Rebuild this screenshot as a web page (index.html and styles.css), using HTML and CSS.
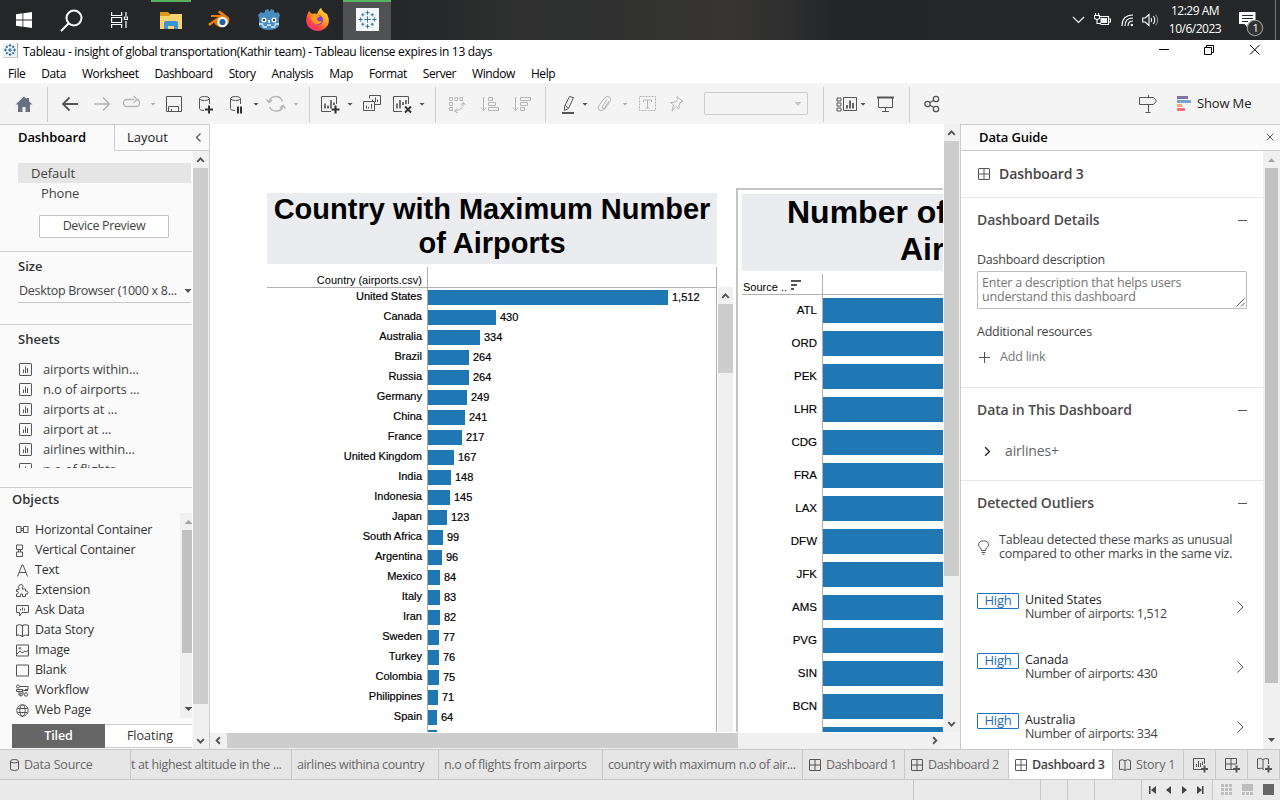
FILE: index.html
```html
<!DOCTYPE html>
<html lang="en">
<head>
<meta charset="utf-8">
<title>Tableau - insight of global transportation</title>
<link rel="stylesheet" href="styles.css">
</head>
<body>
<svg class="defs" width="0" height="0">
  <symbol id="sheet" viewBox="0 0 13 13"><rect x=".5" y=".5" width="12" height="12" rx=".6"/><path d="M4.500 10V6.500M6.500 10V3.500M8.500 10V5"/></symbol>
  <symbol id="grid" viewBox="0 0 12 12"><rect x=".5" y=".5" width="11" height="11" rx=".5"/><path d="M6 .5v11M.5 6h11"/></symbol>
  <symbol id="book" viewBox="0 0 12 12"><path d="M.5 1.500Q3.500-.3 6 1.800 8.500-.3 11.500 1.500V10.500Q8.500 9.500 6 11.500 3.500 9.500.5 10.500ZM6 2v9"/></symbol>
  <symbol id="chev" viewBox="0 0 9 14"><path d="M1.500 1.500 7 7l-5.500 5.500"/></symbol>
  <symbol id="caret" viewBox="0 0 8 22"><path d="M1.500 10h5L4 12.800z"/></symbol>
  <symbol id="logo" viewBox="0 0 20 20"><path d="M10 7v6M7 10h6M10 1.500v4M8 3.500h4M10 14.500v4M8 16.500h4M3.500 8v4M1.500 10h4M16.500 8v4M14.500 10h4M5.500 4v3M4 5.500h3M14.500 4v3M13 5.500h3M5.500 13v3M4 14.500h3M14.500 13v3M13 14.500h3"/></symbol>
  <symbol id="sup" viewBox="0 0 16 17"><path d="M4.500 11 8 7.200 11.500 11"/></symbol>
  <symbol id="sdown" viewBox="0 0 16 17"><path d="M4.500 7 8 10.800 11.500 7"/></symbol>
</svg>

<header class="taskbar">
  <svg class="tk win" viewBox="0 0 16 16"><path d="M0 2.200 6.500 1.300V7.600H0zM7.300 1.200 16 0v7.600H7.300zM0 8.400h6.500v6.400L0 13.800zM7.300 8.400H16V16l-8.700-1.200z"/></svg>
  <svg class="tk find" viewBox="0 0 23 23"><circle cx="14" cy="9" r="7.500"/><path d="M8.500 14.500 1 22"/></svg>
  <svg class="tk view" viewBox="0 0 17 16"><path d="M.6 0v3.500h10V0M.6 16v-3.500h10V16M.6 5.500h10v5H.6zM15 0v4M15 9v7"/><path d="M13.500 5h3v2.500h-3z"/></svg>
  <span class="task files"><svg viewBox="0 0 22 18"><path fill="#dc9a18" d="M0 1h8l2 2h12v15H0z"/><path fill="#f9d371" d="M0 5h9l2-2h11v15H0z"/><path fill="#3c94d8" d="M4 18v-6q0-2 2-2h10q2 0 2 2v6h-4v-3H8v3z"/></svg></span>
  <svg class="tk blender" viewBox="0 0 24 20"><path fill="#e87d0d" d="M0 14 10 7H3V5h10L9.500 2 12 .5l9 7a7.800 7 0 1 1-15 5L2 16z"/><circle cx="14.500" cy="12" r="5.200" fill="#fff"/><circle cx="14.500" cy="12" r="3.100" fill="#25659c"/></svg>
  <svg class="tk godot" viewBox="0 0 22 21"><path fill="#478cbf" d="m0 6 3-3 2 1 2-1V1l3-1 1 2h1l1-2 3 1v2l2 1 2-1 2 3-1 3v8q-3 4-10 4T1 17V9z"/><path fill="#b9d5e9" d="M1 14h4l1 3h3v-2h4v2h3l1-3h4v2h-3l-1 3h-4v-2H9v2H5l-1-3H1z"/><circle cx="6" cy="11" r="2.500" fill="#fff"/><circle cx="16" cy="11" r="2.500" fill="#fff"/><path fill="#414042" d="M5 10h2v2H5zM15 10h2v2h-2z"/><path fill="#fff" d="M10.300 11h1.400v3h-1.400z"/></svg>
  <svg class="tk fox" viewBox="0 0 23 23"><defs><linearGradient id="fx" x1="1" y1="0" x2=".2" y2="1"><stop offset="0" stop-color="#fff044"/><stop offset=".4" stop-color="#ffa51f"/><stop offset=".75" stop-color="#ff4545"/><stop offset="1" stop-color="#ee2b86"/></linearGradient></defs><path fill="url(#fx)" d="M2 5 3 3l3 3q3-1 5 0 2-5 4-6 1 3 4 5l2 1q3 6 1 11-4 6-11 6Q2 22 .3 14 0 8 2 5z"/><circle cx="12" cy="12" r="5" fill="#7b43d1"/><path fill="#ff9822" d="M5 6q5-1 7 1l3 1-4 2q0 4 5 3-2 4-7 3-5-3-4-10z"/></svg>
  <span class="task app"><span><svg viewBox="0 0 20 20"><use href="#logo"/></svg></span></span>
  <div class="tray">
    <svg class="t1" viewBox="0 0 13 8"><path d="m1 1 5.500 5.500L12 1"/></svg>
    <svg class="t2" viewBox="0 0 17 13"><path d="M5 3.500h9.500v8h-8M15 6h1.500v3H15M1.500 0v3M4.500 0v3M.5 2.500h5v3l-2 1h-1l-2-1zM3 6v4.500h4"/><path class="fl" d="M6.500 5H13v5H6.500z"/></svg>
    <svg class="t3" viewBox="0 0 13 13"><path d="M1 12Q1 1 12 1M4 12q0-8 8-8M7 12q0-5 5-5"/><circle cx="10.800" cy="11" r="1.200" class="fl"/></svg>
    <svg class="t4" viewBox="0 0 17 14"><path d="M.7 5h2.500L7 1.500v11L3.200 9H.7zM9 5q1.500 2 0 4M11.300 3q3 4 0 8"/><path opacity=".45" d="M13.600 1.500q4.300 5.500 0 11"/></svg>
    <div class="clock"><span>12:29 AM</span><span>10/6/2023</span></div>
    <svg class="t5" viewBox="0 0 25 25"><path class="fl" d="M0 0h16.500v12H9v4l-3.500-4H0z"/><path stroke="#26282a" d="M3 3.500h11M3 6.500h11M3 9.500h6"/><circle cx="16" cy="16" r="7.700" fill="#333" stroke="#989898"/><text x="13.500" y="20">1</text></svg>
    <i class="peek"></i>
  </div>
</header>

<div class="titlebar">
  <span class="ico"><svg viewBox="0 0 20 20"><use href="#logo"/></svg></span>
  <span class="cap">Tableau - insight of global transportation(Kathir team) - Tableau license expires in 13 days</span>
  <svg class="winctl" viewBox="0 0 102 12"><path d="M0 5.500h10M45.500 3.500h7v7h-7zM47.500 3V1.500h7v7H53M91 1l9.500 9.500M100.500 1 91 10.500"/></svg>
</div>
<nav class="menu"><span>File</span><span>Data</span><span>Worksheet</span><span>Dashboard</span><span>Story</span><span>Analysis</span><span>Map</span><span>Format</span><span>Server</span><span>Window</span><span>Help</span></nav>

<div class="toolbar">
  <svg class="i home m13" viewBox="0 0 22 22"><path d="M11 3.500 2.500 11.500H5V19h4.500v-5h3v5H17v-7.500h2.500L16 8.300V5h-2.500v1z"/></svg>
  <i class="sep m12"></i>
  <svg class="i m11" viewBox="0 0 22 22"><path stroke-width="1.800" d="M19 11H4.500M10.500 4.500 4 11l6.500 6.500"/></svg>
  <svg class="i off m10" viewBox="0 0 22 22"><path stroke-width="1.500" d="M3 11h15M12 4.500 18.500 11 12 17.500"/></svg>
  <svg class="i off m8" viewBox="0 0 22 22"><path stroke-width="1.300" d="M13 6.500H6q-3.500 0-3.500 3.500T6 13.500h9q3.500 0 3.500-3.500T16 6.500M12.500 3 16 6.500 12.500 10"/></svg>
  <svg class="c off m6"><use href="#caret"/></svg>
  <svg class="i m6" viewBox="0 0 22 22"><path d="M3.500 3.500h15v15h-15zM5.500 18.500v-5h10v5M8.500 16v2.500"/></svg>
  <svg class="i m10" viewBox="0 0 22 22"><ellipse cx="9.500" cy="5.500" rx="5" ry="2"/><path d="M4.500 5.500v10q0 2 4.500 2M14.500 5.500V11"/><path class="dk" d="M14 12.500v8M10 16.500h8"/></svg>
  <svg class="i m8" viewBox="0 0 22 22"><ellipse cx="10.500" cy="5.500" rx="5" ry="2"/><path d="M5.500 5.500v10q0 2 4.500 2M15.500 5.500V11"/><path class="dk" d="M13 13.500v7M16 13.500v7"/></svg>
  <svg class="c m5"><use href="#caret"/></svg>
  <svg class="i off m5" viewBox="0 0 22 22"><path stroke-width="1.300" d="M4 9q1-5.500 7-5.500 4.500 0 6.500 5M18 13q-1 5-7 5-4.500 0-6.500-4M1.500 6.500 4 9.500 7 7M20.500 15.500 18 12.500 15 15"/></svg>
  <svg class="c off m5"><use href="#caret"/></svg>
  <i class="sep m9"></i>
  <svg class="i m10" viewBox="0 0 22 22"><path d="M11 18.500H1.500v-15h15V11"/><path stroke-width="1.600" d="M5 15.500v-5M8 15.500v-3M11 15.500V7M14 12V9.500"/><path class="dk" d="M15.500 12.500v8M11.500 16.500h8"/></svg>
  <svg class="c m4"><use href="#caret"/></svg>
  <svg class="i m6" viewBox="0 0 22 22"><path d="M9.500 5.500v-3h11v9h-6M3.500 8.500h11v9h-11zM12.500 8V6.500M15.500 9V4.500M17.500 9V6.500M6.500 15.500v-3M8.500 15.500V14M11.500 15.500V11"/></svg>
  <svg class="i m10" viewBox="0 0 22 22"><path d="M10 18.500H1.500v-15h15V11"/><path stroke-width="1.600" d="M5 15.500v-5M8 15.500V7M11 12V9M14 11V7"/><path class="dk" d="m13 13.500 6 6m0-6-6 6"/></svg>
  <svg class="c m4"><use href="#caret"/></svg>
  <i class="sep m9"></i>
  <svg class="i off m10" viewBox="0 0 22 22"><path d="M3.500 4.500h3v3h-3zM9 4.500h2.500v3H9zM14 4.500h2.500v3H14zM3.500 9.500h3v3h-3zM3.500 14.500h3v3h-3zM9 18q8-1 8.500-8M11.500 15.500 8.500 18l3.500 2M14.500 12l3-2.500 2 2.500"/></svg>
  <svg class="i off m11" viewBox="0 0 22 22"><path d="M4.500 4v13M2 14.500 4.500 17.500 7 14.500M9.500 4.500h4v3h-4zM9.500 9.500h7v3h-7zM9.500 14.500h10v3h-10z"/></svg>
  <svg class="i off m10" viewBox="0 0 22 22"><path d="M4.500 4v13M2 14.500 4.500 17.500 7 14.500M9.500 4.500h10v3h-10zM9.500 9.500h7v3h-7zM9.500 14.500h4v3h-4z"/></svg>
  <i class="sep m12"></i>
  <svg class="i m11" viewBox="0 0 22 22"><path d="m12.500 3.500 4 1-5 11-4 2v-4zM8 12.500l3.500 2.500"/><path stroke-width="2" d="M5 20h12"/></svg>
  <svg class="c m2"><use href="#caret"/></svg>
  <svg class="i off m5" viewBox="0 0 22 22"><path d="m15 8-5 8q-2 2.500-5 1-2-2 0-4.500l6-8q2-2 4.500-.5 2 2 .5 4.500l-5.500 8M13 6.500l-5 7.500q0 2 2 1"/></svg>
  <svg class="c off m5"><use href="#caret"/></svg>
  <svg class="i off m7" viewBox="0 0 22 22"><path stroke-dasharray="2 1" d="M3.500 3.500h16v14h-16z"/><path d="M7.500 9V7h8v2M11.500 7v8M9.500 15h4"/></svg>
  <svg class="i off m8" viewBox="0 0 22 22"><path d="m11 3.500 6 5-2 .5-2 3v4l-3-2.500-4 4.500 1.500-6-3-2.500 5-.5 2-2.500z"/></svg>
  <span class="pick m16"><svg viewBox="0 0 8 6"><path d="M.5 1h7L4 5z"/></svg></span>
  <i class="sep m15"></i>
  <svg class="i m12" viewBox="0 0 22 22"><path d="M1 5h4v3H1zM1 10h4v3H1zM1 15h4v3H1zM7.500 4.500h13v13h-13z"/><path stroke-width="1.800" d="M11 15.500V12M14 15.500v-8M17 15.500V10"/></svg>
  <svg class="c m1"><use href="#caret"/></svg>
  <svg class="i m7" viewBox="0 0 22 22"><path d="M4.500 4.500v10h14v-10M11.500 14.500v4M8 18.500h7"/><path stroke-width="2" d="M3 4.500h17"/></svg>
  <i class="sep m13"></i>
  <svg class="i share m11" viewBox="0 0 22 22"><circle cx="6.500" cy="11" r="2.700"/><circle cx="15" cy="6" r="2.700"/><circle cx="15" cy="16" r="2.700"/><path d="m9 9.500 3.500-2M9 12.300l3.500 2"/></svg>
  <svg class="i sign" viewBox="0 0 22 22"><path d="M2.500 4.500h14l3 3.500-3 3.500h-14zM11.500 2v2M11.500 11.500v8M8.500 19.500h5"/></svg>
  <svg class="bars" viewBox="0 0 14 15"><path fill="#8274a5" d="M0 0h11v3H0z"/><path fill="#7ba3cf" d="M0 4h14v3H0z"/><path fill="#f3a66f" d="M0 8h5v3H0z"/><path fill="#fb6c7c" d="M0 12h8v3H0z"/></svg>
  <span class="showme">Show Me</span>
</div>

<main>
  <aside class="left">
    <div class="ltabs"><b>Dashboard</b><span class="lay"><span>Layout</span><svg viewBox="0 0 9 14"><path d="M6.500 3.500 2.500 7.500l4 4"/></svg></span></div>
    <div class="lbody">
      <div class="lcol">
        <div class="row def"><span>Default</span></div>
        <div class="row pho"><span>Phone</span></div>
        <div class="dev"><span>Device Preview</span></div>
        <section class="size"><h4>Size</h4><div class="drop"><span>Desktop Browser (1000 x 8...</span><svg viewBox="0 0 8 6"><path d="M.5 1h7L4 5z"/></svg></div></section>
        <section class="sheets"><h4>Sheets</h4>
          <ul>
            <li><svg><use href="#sheet"/></svg><span>airports within...</span></li>
            <li><svg><use href="#sheet"/></svg><span>n.o of airports ...</span></li>
            <li><svg><use href="#sheet"/></svg><span>airports at ...</span></li>
            <li><svg><use href="#sheet"/></svg><span>airport at ...</span></li>
            <li><svg><use href="#sheet"/></svg><span>airlines within...</span></li>
            <li><svg><use href="#sheet"/></svg><span>n.o of flights ...</span></li>
          </ul>
        </section>
        <section class="objects"><h4>Objects</h4>
          <div class="olist">
            <ul>
              <li><svg viewBox="0 0 13 13"><path d="M.5 2.500h4.500v6H.5zM7.500 2.500H12v6H7.500zM5 4.500h2.500M5 6.500h2.500"/></svg><span>Horizontal Container</span></li>
              <li><svg viewBox="0 0 13 13"><path d="M.5 1h6v4.500h-6zM.5 8h6v4.500h-6zM2.500 5.500V8M4.500 5.500V8"/></svg><span>Vertical Container</span></li>
              <li><svg viewBox="0 0 13 13"><path d="M1.500 12.500 6 1h1l4.500 11.500M3 8.500h7"/></svg><span>Text</span></li>
              <li><svg viewBox="0 0 13 13"><path d="M.5 5.500H3V4L2.500 2.500q.5-2 2.500-2t2 2L6.500 4v1h3v2q2.500-.5 2.500 1.500T9.500 10v2.500h-3V10h-2v2.500h-4V10q2 0 2-1.500t-2-1z"/></svg><span>Extension</span></li>
              <li><svg viewBox="0 0 13 13"><path d="M.5 1.500h12v7H6L3.500 12V8.500h-3zM4.500 6.500V5M6.500 6.500V3.500M8.500 6.500v-2"/></svg><span>Ask Data</span></li>
              <li><svg viewBox="0 0 12 12"><use href="#book"/></svg><span>Data Story</span></li>
              <li><svg viewBox="0 0 13 13"><path d="M.5 1h12v11H.5zM1 10l3-3 2 2 3-2 1.500 1L12 6"/><circle cx="4" cy="4.300" r=".8"/></svg><span>Image</span></li>
              <li><svg viewBox="0 0 13 13"><path d="M.5 1h12v11H.5z"/></svg><span>Blank</span></li>
              <li><svg viewBox="0 0 13 13"><circle cx="2" cy="2.500" r="1.500"/><circle cx="10" cy="10.500" r="1.700"/><path d="M4 2.500h8v3H9M.5 5.500h6v2h-6zM3 8v3h2.500M7 5.500v5M8 6.500h4"/><circle cx="5" cy="10.500" r="1.500"/></svg><span>Workflow</span></li>
              <li><svg viewBox="0 0 13 13"><circle cx="6.500" cy="6.500" r="5.700"/><ellipse cx="6.500" cy="6.500" rx="2.700" ry="5.700"/><path d="M1.500 4.500h10M1.500 8.500h10"/></svg><span>Web Page</span></li>
            </ul>
            <div class="oscroll"><svg viewBox="0 0 12 17"><path fill="#a3a3a3" d="M4.500 11 8.500 7l4 4z"/></svg><i></i><svg viewBox="0 0 12 17"><path fill="#505050" d="m4.500 6 4 4 4-4z"/></svg></div>
          </div>
        </section>
        <div class="mode"><b>Tiled</b><span>Floating</span></div>
      </div>
      <div class="vbar"><svg><use href="#sup"/></svg><i></i><svg><use href="#sdown"/></svg></div>
    </div>
  </aside>

  <div class="canvas">
    <div class="stage">
      <div class="viz one">
        <h2><span>Country with Maximum Number</span><span>of Airports</span></h2>
        <div class="plot">
          <div class="hd"><span>Country (airports.csv)</span></div>
          <div class="r"><span>United States</span><i style="width:240px"></i><b>1,512</b></div>
          <div class="r"><span>Canada</span><i style="width:68px"></i><b>430</b></div>
          <div class="r"><span>Australia</span><i style="width:52px"></i><b>334</b></div>
          <div class="r"><span>Brazil</span><i style="width:41px"></i><b>264</b></div>
          <div class="r"><span>Russia</span><i style="width:41px"></i><b>264</b></div>
          <div class="r"><span>Germany</span><i style="width:39px"></i><b>249</b></div>
          <div class="r"><span>China</span><i style="width:37px"></i><b>241</b></div>
          <div class="r"><span>France</span><i style="width:34px"></i><b>217</b></div>
          <div class="r"><span>United Kingdom</span><i style="width:26px"></i><b>167</b></div>
          <div class="r"><span>India</span><i style="width:23px"></i><b>148</b></div>
          <div class="r"><span>Indonesia</span><i style="width:22px"></i><b>145</b></div>
          <div class="r"><span>Japan</span><i style="width:19px"></i><b>123</b></div>
          <div class="r"><span>South Africa</span><i style="width:15px"></i><b>99</b></div>
          <div class="r"><span>Argentina</span><i style="width:14px"></i><b>96</b></div>
          <div class="r"><span>Mexico</span><i style="width:12px"></i><b>84</b></div>
          <div class="r"><span>Italy</span><i style="width:12px"></i><b>83</b></div>
          <div class="r"><span>Iran</span><i style="width:12px"></i><b>82</b></div>
          <div class="r"><span>Sweden</span><i style="width:11px"></i><b>77</b></div>
          <div class="r"><span>Turkey</span><i style="width:11px"></i><b>76</b></div>
          <div class="r"><span>Colombia</span><i style="width:11px"></i><b>75</b></div>
          <div class="r"><span>Philippines</span><i style="width:10px"></i><b>71</b></div>
          <div class="r"><span>Spain</span><i style="width:9px"></i><b>64</b></div>
          <div class="r"><span></span><i style="width:9px"></i></div>
        </div>
      </div>
      <div class="vbar mini"><svg><use href="#sup"/></svg><i></i></div>
      <div class="viz two">
        <h2><span>Number of</span><span class="l2">Airports</span></h2>
        <div class="plot">
          <div class="hd"><span>Source ..</span><svg viewBox="0 0 10 10"><path d="M0 0h10v2H0zM0 4h6v2H0zM0 8h3v2H0z"/></svg></div>
          <div class="r"><span>ATL</span><i></i></div><div class="r"><span>ORD</span><i></i></div><div class="r"><span>PEK</span><i></i></div><div class="r"><span>LHR</span><i></i></div><div class="r"><span>CDG</span><i></i></div><div class="r"><span>FRA</span><i></i></div><div class="r"><span>LAX</span><i></i></div><div class="r"><span>DFW</span><i></i></div><div class="r"><span>JFK</span><i></i></div><div class="r"><span>AMS</span><i></i></div><div class="r"><span>PVG</span><i></i></div><div class="r"><span>SIN</span><i></i></div><div class="r"><span>BCN</span><i></i></div><div class="r"><span></span><i></i></div>
        </div>
      </div>
    </div>
    <div class="vbar cv"><svg><use href="#sup"/></svg><i></i><svg><use href="#sdown"/></svg></div>
    <div class="hbar"><svg viewBox="0 0 17 16"><path d="M10 4.500 6.500 8l3.500 3.500"/></svg><i></i><svg viewBox="0 0 17 16"><path d="M7 4.500 10.500 8 7 11.500"/></svg></div>
    <div class="corner"></div>
  </div>

  <aside class="guide">
    <div class="ghead"><b>Data Guide</b><svg viewBox="0 0 8 8"><path d="m.7.7 6.600 6.600m0-6.600L.7 7.300"/></svg></div>
    <div class="gwrap">
      <div class="gcol">
        <div class="gname"><svg viewBox="0 0 12 12"><use href="#grid"/></svg><b>Dashboard 3</b></div>
        <section class="det"><h3><span>Dashboard Details</span><i></i></h3>
          <label>Dashboard description</label>
          <div class="area"><span>Enter a description that helps users<br>understand this dashboard</span><svg viewBox="0 0 9 9"><path d="M.5 8.500l8-8M5 8.500 8.500 5"/></svg></div>
          <label class="res">Additional resources</label>
          <div class="add"><svg viewBox="0 0 11 11"><path d="M5.500 0v11M0 5.500h11"/></svg><span>Add link</span></div>
        </section>
        <section class="dat"><h3><span>Data in This Dashboard</span><i></i></h3>
          <div class="air"><svg viewBox="0 0 9 14"><use href="#chev"/></svg><span>airlines+</span></div>
        </section>
        <section class="out"><h3><span>Detected Outliers</span><i></i></h3>
          <div class="tip"><svg viewBox="0 0 12 15"><path d="M4 10.500Q4 9 2.500 7.500 1 6 1 5.200 1 .8 6 .8t5 4.400q0 .8-1.500 2.300Q8 9 8 10.500zM4 12.500h4M5 14.300h2"/></svg><p>Tableau detected these marks as unusual<br>compared to other marks in the same viz.</p></div>
          <div class="hit"><em>High</em><p><b>United States</b><span>Number of airports: 1,512</span></p><svg viewBox="0 0 9 14"><use href="#chev"/></svg></div>
          <div class="hit"><em>High</em><p><b>Canada</b><span>Number of airports: 430</span></p><svg viewBox="0 0 9 14"><use href="#chev"/></svg></div>
          <div class="hit"><em>High</em><p><b>Australia</b><span>Number of airports: 334</span></p><svg viewBox="0 0 9 14"><use href="#chev"/></svg></div>
        </section>
      </div>
      <div class="gbar"><svg viewBox="0 0 17 17"><path fill="#a3a3a3" d="M5 11 8.500 7.200 12 11z"/></svg><i></i><svg viewBox="0 0 17 17"><path fill="#505050" d="m5 6 3.500 4L12 6z"/></svg></div>
    </div>
  </aside>
</main>

<footer class="tabs">
  <div class="t a"><svg viewBox="0 0 9 12"><path d="M.5 2.200q0-1.700 4-1.700t4 1.700v7.600q0 1.700-4 1.700t-4-1.700zM.5 2.200q0 1.700 4 1.700t4-1.700"/></svg><span>Data Source</span></div>
  <div class="t b"><span>t at highest altitude in the ...</span></div>
  <div class="t c3"><span>airlines withina country</span></div>
  <div class="t d"><span>n.o of flights from airports</span></div>
  <div class="t e"><span>country with maximum n.o of air...</span></div>
  <div class="t f"><svg><use href="#grid"/></svg><span>Dashboard 1</span></div>
  <div class="t g"><svg><use href="#grid"/></svg><span>Dashboard 2</span></div>
  <div class="t h"><svg><use href="#grid"/></svg><span>Dashboard 3</span></div>
  <div class="t s"><svg><use href="#book"/></svg><span>Story 1</span></div>
  <div class="t n"><svg viewBox="0 0 16 16"><path d="M8 12.500H.5v-11h11V7M3.500 10V7M5.500 10V4M7.500 10V6M9.500 8V4.500"/><path class="pl" d="M11.500 8.500v7M8 12h7"/></svg></div>
  <div class="t n"><svg viewBox="0 0 16 16"><path d="M8 12.500H.5v-11h11V7M.5 7h11M6 1.500v11"/><path class="pl" d="M11.500 8.500v7M8 12h7"/></svg></div>
  <div class="t n"><svg viewBox="0 0 16 16"><path d="M7 12.500Q5 10.500.5 11.500v-9.500Q3.500.5 6 2.500q2.500-2 5.500-.5v5M6 2.500v9"/><path class="pl" d="M11.500 8.500v7M8 12h7"/></svg></div>
</footer>
<div class="status">
  <i class="s1"></i><i class="s2"></i><i class="s3"></i><i class="s4"></i>
  <div class="nav"><svg viewBox="0 0 56 8"><path d="M0 0h1.500v8H0zM7 0v8L2 4zM22 0v8l-5-4zM33 0v8l5-4zM48 0v8l5-4zM53 0h1.500v8H53z"/></svg></div>
  <div class="modes"><svg viewBox="0 0 53 11"><path fill="#bdbdbd" d="M0 0h3v3H0zM4 0h3v3H4zM8 0h3v3H8zM0 4h3v3H0zM4 4h3v3H4zM8 4h3v3H8zM0 8h3v3H0zM4 8h3v3H4zM8 8h3v3H8zM21 0h11v7H21zM21 8h3v3h-3zM25 8h3v3h-3zM29 8h3v3h-3z"/><path fill="#666" d="M42 0h11v11H42z"/></svg></div>
</div>
</body>
</html>
```
FILE: styles.css
```css
* { box-sizing: border-box; }
body { margin: 0; width: 1280px; height: 800px; overflow: hidden; display: flex; flex-direction: column; background: #fff; font: 13px/20px "Open Sans", sans-serif; color: #444; }
h2, h3, h4, p, ul { margin: 0; padding: 0; list-style: none; }
i, em { font-style: normal; }
svg { display: block; flex: none; fill: none; stroke: #555; }
span, b { white-space: nowrap; }
.defs { position: absolute; }

.taskbar { height: 40px; flex: none; display: flex; align-items: flex-start; background: linear-gradient(90deg, #242628 0, #252729 32%, #2f302f 41%, #2f3030 45%, #363533 57%, #303030 61%, #232526 65%, #252728 100%); }
.tk { stroke: #fff; }
.win { width: 16px; height: 16px; margin: 12px 0 0 16px; fill: #fff; stroke: none; }
.find { width: 23px; height: 23px; margin: 9px 0 0 28px; stroke-width: 2; }
.view { width: 17px; height: 16px; margin: 12px 0 0 28px; stroke-width: 1.200; }
.task { height: 40px; border-top: 2px solid #58b15c; display: flex; justify-content: center; }
.files { width: 40px; margin-left: 23px; padding-top: 9px; }
.files svg { width: 22px; height: 18px; stroke: none; }
.blender { width: 24px; height: 20px; margin: 10px 0 0 17px; stroke: none; }
.godot { width: 22px; height: 21px; margin: 9px 0 0 26px; stroke: none; }
.fox { width: 23px; height: 23px; margin: 8px 0 0 26px; stroke: none; }
.app { width: 48px; margin-left: 14px; background: #505152; padding-top: 6px; }
.app span { width: 23px; height: 23px; background: #f4f7fa; padding: 1px; }
.app svg { width: 21px; height: 21px; stroke: #2e6f9e; stroke-width: .9; }
.tray { margin-left: auto; display: flex; align-items: flex-start; padding-right: 4px; }
.tray svg { stroke: #fff; stroke-width: 1.100; }
.tray .fl { fill: #fff; stroke: none; }
.t1 { width: 13px; height: 8px; margin: 16px 9px 0 0; }
.t2 { width: 17px; height: 13px; margin: 13px 10px 0 0; }
.t3 { width: 13px; height: 13px; margin: 14px 8px 0 0; }
.t4 { width: 17px; height: 14px; margin: 13px 9px 0 0; }
.clock { width: 54px; margin: 2px 17px 0 0; display: flex; flex-direction: column; align-items: center; font-size: 12px; line-height: 18px; color: #fff; letter-spacing: -.5px; }
.t5 { width: 25px; height: 25px; margin-top: 12px; }
.t5 text { fill: #fff; stroke: none; font: 11px "Open Sans", sans-serif; }
.peek { width: 1px; height: 40px; margin-left: 11px; background: #777; }

.titlebar { height: 24px; flex: none; display: flex; align-items: flex-start; padding-left: 3px; color: #000; }
.ico { width: 15px; height: 15px; margin-top: 3px; border-right: 1px solid #aaa; border-bottom: 1px solid #ccc; background: #eef3f8; }
.ico svg { width: 14px; height: 14px; stroke: #286b9a; stroke-width: 1.500; }
.cap { margin: 2px 0 0 5px; font-size: 12px; letter-spacing: -.325px; }
.winctl { width: 102px; height: 12px; margin: 4px 19px 0 auto; stroke: #000; }
.menu { height: 19px; flex: none; display: flex; padding-left: 8px; gap: 16px; font-size: 12px; line-height: 20px; color: #000; letter-spacing: -.42px; }

.toolbar { height: 41px; flex: none; display: flex; align-items: flex-start; background: #f4f4f4; }
.i { width: 22px; height: 22px; margin-top: 10px; }
.c { width: 8px; height: 22px; margin-top: 10px; fill: #555; stroke: none; }
.off { stroke: #b5b5b5; }
.c.off { fill: #b5b5b5; stroke: none; }
.home { fill: #667282; stroke: none; }
.share { stroke-width: 1.300; }
.dk { stroke: #333; stroke-width: 2; }
.sep { width: 1px; height: 35px; margin-top: 4px; background: #ccc; }
.toolbar .m1 { margin-left: 1px; } .toolbar .m2 { margin-left: 2px; } .toolbar .m4 { margin-left: 4px; }
.toolbar .m5 { margin-left: 5px; } .toolbar .m6 { margin-left: 6px; } .toolbar .m7 { margin-left: 7px; }
.toolbar .m8 { margin-left: 8px; } .toolbar .m9 { margin-left: 9px; } .toolbar .m10 { margin-left: 10px; }
.toolbar .m11 { margin-left: 11px; } .toolbar .m12 { margin-left: 12px; } .toolbar .m13 { margin-left: 13px; }
.toolbar .m15 { margin-left: 15px; } .toolbar .m16 { margin-left: 16px; }
.pick { width: 104px; height: 23px; margin-top: 9px; border: 1px solid #ccc; border-radius: 2px; display: flex; justify-content: flex-end; align-items: center; padding-right: 5px; }
.pick svg { width: 8px; height: 6px; fill: #c4c4c4; stroke: none; }
.sign { margin-left: 194px; }
.bars { width: 14px; height: 15px; margin: 13px 6px 0 18px; stroke: none; }
.showme { margin-top: 10px; color: #222; letter-spacing: -.15px; }

main { height: 625px; flex: none; display: flex; }
.left { width: 210px; border-right: 1px solid #ccc; background: #fafafa; display: flex; flex-direction: column; }
.ltabs { height: 27px; flex: none; border-top: 1px solid #ccc; display: flex; line-height: 25px; color: #000; }
.ltabs b { width: 114px; padding-left: 18px; font-weight: 600; letter-spacing: -.1px; }
.lay { flex: 1; display: flex; align-items: center; justify-content: space-between; border: 1px solid #ccc; border-width: 0 0 1px 1px; padding: 0 6px 0 12px; color: #222; }
.lay svg { width: 9px; height: 14px; stroke-width: 1.300; margin-bottom: 2px; }
.lbody { flex: 1; display: flex; min-height: 0; }
.lcol { width: 193px; padding-right: 1px; display: flex; flex-direction: column; }
.row { height: 20px; margin: 0 1px 0 18px; flex: none; }
.def { margin-top: 12px; background: #e5e5e5; padding-left: 13px; }
.pho { padding-left: 23px; letter-spacing: -.15px; }
.dev { width: 130px; height: 23px; margin: 12px 0 13px 39px; border: 1px solid #c4c4c4; border-radius: 1px; background: #fff; text-align: center; font-size: 12.500px; letter-spacing: -.34px; flex: none; }
.lcol section { border-top: 1px solid #ccc; flex: none; }
h4 { font-weight: 600; font-size: 13px; color: #333; line-height: 20px; }
.size { height: 73px; padding: 4px 1px 0 18px; }
.drop { margin-top: 5px; height: 22px; border-bottom: 1px solid #c8c8c8; display: flex; justify-content: space-between; align-items: center; font-size: 12.500px; letter-spacing: -.28px; padding: 0 0 2px 1px; }
.drop svg { width: 8px; height: 6px; margin-right: -1px; fill: #555; stroke: none; }
.sheets { height: 163px; padding: 4px 0 0 18px; }
.sheets ul { margin-top: 10px; height: 109px; overflow: hidden; letter-spacing: -.16px; }
li { height: 20px; display: flex; align-items: center; line-height: 20px; }
.sheets li svg { width: 13px; height: 13px; margin: 0 11px 0 1px; }
.objects { height: 237px; padding-top: 1px; }
.objects h4 { padding-left: 12px; }
.olist { margin-top: 4px; display: flex; height: 205px; }
.olist ul { width: 180px; padding: 7px 0 0 16px; overflow: hidden; }
.olist li { color: #333; font-size: 12.500px; letter-spacing: -.2px; }
.olist li svg { width: 13px; height: 13px; margin-right: 6px; }
.oscroll { width: 12px; background: #f0f0f0; display: flex; flex-direction: column; }
.oscroll svg { width: 12px; height: 17px; stroke: none; overflow: hidden; }
.oscroll i { height: 123px; margin: 0 0 48px 2px; background: #c1c1c1; }
.mode { display: flex; height: 24px; margin: 0 0 0 12px; line-height: 23px; text-align: center; flex: none; }
.mode b { width: 93px; background: #666; color: #fff; font-weight: 600; font-size: 12.500px; letter-spacing: -.1px; }
.mode span { flex: 1; background: #fff; border: 1px solid #ccc; border-width: 1px 0; color: #333; font-size: 12.500px; line-height: 22px; padding-left: 3px; }
.vbar { width: 16px; background: #f0f0f0; display: flex; flex-direction: column; }
.vbar svg { width: 15px; height: 17px; stroke-width: 2; }
.vbar i { width: 15px; background: #cdcdcd; height: 536px; }
.lbody .vbar svg:last-child { margin-top: 28px; }

.canvas { width: 750px; display: grid; grid-template-columns: 733px 17px; grid-template-rows: 608px 17px; }
.stage { overflow: hidden; display: flex; padding-left: 57px; background: #fff; font-family: "Liberation Sans", Arial, sans-serif; color: #000; }
.viz { flex: none; }
.one { width: 450px; padding-top: 69px; }
.viz h2 { background: #ebecf0; display: flex; flex-direction: column; font-weight: 700; }
.one h2 { height: 71px; align-items: center; font-size: 29px; line-height: 34px; }
.one h2 span { margin-top: -1px; margin-bottom: 1px; }
.one .plot { margin-top: 3px; border-right: 1px solid #b0b0b0; height: 470px; overflow: hidden; background: linear-gradient(#b0b0b0, #b0b0b0) 160px 0 / 1px 100% no-repeat; }
.one .hd { height: 21px; border-bottom: 1px solid #b0b0b0; font-size: 11px; line-height: 26px; width: 450px; }
.one .hd span { display: block; width: 155px; text-align: right; }
.one .r { height: 20px; display: flex; align-items: flex-start; font-size: 11px; line-height: 16px; -webkit-text-stroke: .2px #000; }
.one .r span { width: 161px; padding-right: 6px; text-align: right; }
.r i { background: #1f77b4; }
.one .r i { height: 15px; margin: 2px 4px 0 0; }
.one .r b { font-weight: 400; line-height: 18px; }
.mini { width: 16px; margin: 163px 2px 0 1px; }
.mini i { height: 69px; }
.two { width: 480px; height: 700px; margin: 64px 0 0; border: 2px solid #c4c4c4; padding: 4px 0 0 4px; }
.mini + .two { margin-left: 1px; }
.two h2 { height: 77px; font-size: 32px; line-height: 37px; padding-left: 45px; }
.two .l2 { padding-left: 113px; }
.two .plot { margin-top: 3px; height: 480px; background: linear-gradient(#b0b0b0, #b0b0b0) 80px 0 / 1px 100% no-repeat; }
.two .hd { height: 21px; border-bottom: 1px solid #b0b0b0; display: flex; font-size: 11px; line-height: 26px; padding-left: 1px; }
.two .hd svg { width: 10px; height: 10px; margin: 6px 0 0 4px; fill: #555; stroke: none; }
.two .r { height: 33px; display: flex; font-size: 11.500px; line-height: 30px; -webkit-text-stroke: .15px #000; }
.two .r span { width: 81px; padding-right: 6px; text-align: right; }
.two .r i { flex: 1; height: 25px; margin-top: 3px; }
.cv { margin-left: 1px; }
.cv i { height: 435px; }
.cv svg:last-child { margin-top: 139px; }
.hbar { background: #f0f0f0; display: flex; margin-top: 1px; }
.hbar svg { width: 17px; height: 15px; stroke-width: 2; }
.hbar i { width: 511px; height: 15px; margin-right: 188px; background: #cdcdcd; }
.corner { background: #f4f4f4; }

.guide { width: 320px; border-left: 1px solid #ccc; display: flex; flex-direction: column; background: #fff; }
.ghead { height: 27px; flex: none; border: 1px solid #ccc; border-width: 1px 0; background: #fafafa; display: flex; align-items: center; justify-content: space-between; padding: 0 6px 2px 18px; color: #000; }
.ghead b { font-weight: 600; font-size: 13px; letter-spacing: -.15px; }
.ghead svg { width: 8px; height: 8px; }
.gwrap { height: 598px; display: flex; }
.gcol { width: 302px; overflow: hidden; }
.gname { height: 46px; display: flex; align-items: center; padding-left: 17px; gap: 9px; font-size: 14px; color: #444; letter-spacing: -.1px; }
.gname svg { width: 12px; height: 12px; }
.gname b, h3 { font-weight: 600; }
.gcol section { border-top: 1px solid #e8e8e8; padding: 12px 16px 0; }
.det { height: 190px; } .dat { height: 93px; }
h3 { font-size: 14px; color: #4c4c4c; height: 20px; display: flex; align-items: center; justify-content: space-between; letter-spacing: -.12px; }
h3 i { width: 9px; height: 1px; background: #555; }
label { display: block; margin-top: 21px; font-size: 12.500px; line-height: 18px; letter-spacing: -.25px; }
.area { height: 38px; margin-top: 2px; width: 270px; border: 1px solid #bcbcbc; border-radius: 1px; padding: 4px 1px 0 4px; display: flex; justify-content: space-between; font-size: 12.500px; line-height: 14px; color: #757575; letter-spacing: -.2px; }
.area svg { width: 9px; height: 9px; align-self: flex-end; margin-bottom: 1px; }
label.res { margin-top: 14px; }
.add { margin-top: 6px; display: flex; align-items: center; gap: 10px; padding-left: 2px; color: #777; font-size: 12.500px; letter-spacing: -.2px; }
.add svg { width: 11px; height: 11px; }
.air { display: flex; align-items: center; margin-top: 21px; padding-left: 6px; gap: 13px; font-size: 14px; color: #666; letter-spacing: -.15px; }
.air svg { width: 9px; height: 11px; stroke: #222; stroke-width: 1.700; }
.tip { margin-top: 20px; display: flex; gap: 9px; font-size: 12.500px; line-height: 14px; color: #444; letter-spacing: -.22px; }
.tip svg { width: 13px; height: 15px; margin-top: 7px; }
.hit { display: flex; height: 60px; line-height: 14px; font-size: 12.500px; letter-spacing: -.36px; }
.tip + .hit { margin-top: 32px; }
.hit em { width: 42px; height: 16px; margin: 0 6px 0 0; border: 1px solid #1a73c7; border-radius: 1px; color: #1a6bc0; text-align: center; font-size: 13px; line-height: 13px; letter-spacing: -.2px; }
.hit p { flex: 1; display: flex; flex-direction: column; }
.hit b { font-weight: 500; color: #222; letter-spacing: -.1px; }
.hit svg { width: 9px; height: 14px; margin: 7px 2px 0 0; }
.gbar { width: 17px; background: #f0f0f0; display: flex; flex-direction: column; }
.gbar svg { width: 17px; height: 17px; stroke: none; }
.gbar i { height: 515px; width: 13px; margin: 0 2px 49px; background: #c1c1c1; }

.tabs { height: 31px; flex: none; display: flex; border: 1px solid #c8c8c8; border-width: 1px 0; background: #e6e6e6; }
.t { border-right: 1px solid #c8c8c8; display: flex; align-items: center; overflow: hidden; font-size: 12.500px; color: #666; padding-left: 6px; letter-spacing: -.37px; }
.t span { padding-top: 1px; }
.t svg { width: 12px; height: 12px; margin-right: 5px; }
.a { width: 131px; padding-left: 10px; letter-spacing: -.2px; } .a svg { width: 9px; }
.b { width: 161px; padding-left: 0; } .c3 { width: 147px; padding-left: 5px; } .d { width: 164px; padding-left: 5px; } .e { width: 200px; padding-left: 5px; }
.f { width: 102px; } .g { width: 104px; } .h { width: 104px; background: #fff; font-weight: 600; color: #444; } .s { width: 71px; letter-spacing: -.2px; }
.n { width: 32px; padding-left: 9px; } .t.n svg { width: 16px; height: 16px; margin: 0; }
.pl { stroke: #555; stroke-width: 2; }
.status { height: 20px; flex: none; display: flex; background: #eaeaea; }
.status > * { border-right: 1px solid #c8c8c8; }
.s1 { width: 914px; } .s2 { width: 127px; } .s3 { width: 27px; } .s4 { width: 27px; }
.nav { width: 118px; padding: 6px 0 0 54px; border-left: 0; background: linear-gradient(#c8c8c8, #c8c8c8) 46px 0 / 1px 100% no-repeat; }
.nav svg { width: 56px; height: 8px; fill: #444; stroke: none; }
.status .modes { border: 0; padding: 4px 0 0 8px; }
.modes svg { width: 53px; height: 11px; stroke: none; }
```
